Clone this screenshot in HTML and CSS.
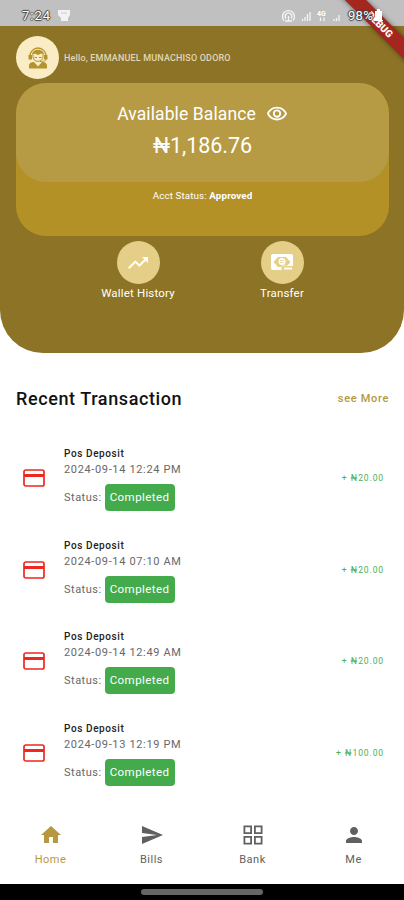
FILE: index.html
```html
<!DOCTYPE html>
<html lang="en">
<head>
<meta charset="utf-8">
<meta name="viewport" content="width=device-width, initial-scale=1">
<title>Wallet</title>
<link rel="stylesheet" href="styles.css">
</head>
<body>
<div class="statusbar">
  <span class="time">7:24</span>
  <svg class="cup" width="14" height="14" viewBox="0 0 14 14"><path d="M1 1h12v5l-2 3v3H4V9L1 6z" fill="#f2f2f2"/><path d="M4 4h6" stroke="#ccc" fill="none"/></svg>
  <svg class="signals" width="66" height="14" viewBox="0 0 66 14" fill="none" stroke="#f5f5f5" stroke-width="1.3">
    <path d="M3 11.5a6 6 0 1 1 9 0M5 9.5a3.3 3.3 0 1 1 5 0M7.5 7v5"/>
    <path d="M4 12h7M21.500 12v-2M24 12V8M26.500 12V5M29 12V3" />
    <path d="M39.500 12V8.500M43 12V8.500M53 12v-2M55.500 12V9M58 12V6" />
    <text x="36" y="7" class="net">4G</text>
  </svg>
  <span class="percent">98%</span>
  <svg class="battery" width="9" height="13" viewBox="0 0 9 13"><path d="M3 0h3v2h2v9h1v1H0v-1h1V2h2z" fill="#fff"/></svg>
</div>
<div class="corner"><div class="ribbon">DEBUG</div></div>

<header class="hero">
  <div class="greeting">
    <div class="avatar">
      <svg width="20" height="22" viewBox="0 0 20 22">
        <path d="M2 9a8 8 0 0 1 16 0" fill="none" stroke="#b5942e" stroke-width="1.300"/>
        <path d="M4 8c0-7 12-7 12 0l-3-1.500L10 8 7 6.500zM.5 8H4v4.500H.5zM16 8h3.500v4.500H16z" fill="#b5942e"/>
        <path d="M5 8v1.500c0 6.500 10 6.500 10 0V8M6.500 10.500h2.500M11 10.500h2.500M18 12c0 2-2 2.500-6 2.500" fill="none" stroke="#b5942e"/>
        <path d="M1 21.500V19c0-3 2-4 5-4l4 4.500 4-4.500c3 0 5 1 5 4v2.500z" fill="#b5942e"/>
      </svg>
    </div>
    <span class="hello">Hello, EMMANUEL MUNACHISO ODORO</span>
  </div>
  <section class="card">
    <div class="balance">
      <div class="label"><span>Available Balance</span>
        <svg width="22" height="22" viewBox="0 0 24 24" fill="#fff"><path d="M12 6c3.790 0 7.170 2.130 8.820 5.500C19.170 14.870 15.790 17 12 17s-7.170-2.130-8.820-5.500C4.830 8.130 8.210 6 12 6m0-2C7 4 2.730 7.110 1 11.500 2.730 15.890 7 19 12 19s9.270-3.110 11-7.500C21.270 7.110 17 4 12 4zm0 5a2.500 2.500 0 1 1 0 5 2.500 2.500 0 0 1 0-5m0-2a4.500 4.500 0 1 0 0 9 4.500 4.500 0 0 0 0-9z"/></svg>
      </div>
      <div class="amount">₦1,186.76</div>
    </div>
    <div class="acct">Acct Status: <b>Approved</b></div>
  </section>
  <nav class="actions">
    <div class="action">
      <div class="disc"><svg width="24" height="24" viewBox="0 0 24 24" fill="#fff"><path d="m16 6 2.290 2.290-4.880 4.880-4-4L2 16.590 3.410 18l6-6 4 4 6.300-6.290L22 12V6z"/></svg></div>
      <span>Wallet History</span>
    </div>
    <div class="action">
      <div class="disc"><svg width="22" height="17" viewBox="0 0 22 17"><path d="M2 0h18q2 0 2 2v10H12v4H2q-2 0-2-2V2q0-2 2-2z" fill="#fff"/><path d="M2.500 8 7 3h8l4.500 5-3 3.500H12L10 13H7z" fill="#e5cf88"/><circle cx="11" cy="7.500" r="3.500" fill="#fff"/><path d="M9 6.500h4M9 8.500h4" stroke="#e5cf88" stroke-width=".7"/><path d="M10.500 12.500H22V17H10.500z" fill="#e5cf88"/><path d="M13 14.500h8" stroke="#fff" stroke-width="2"/></svg></div>
      <span>Transfer</span>
    </div>
  </nav>
</header>

<main>
  <div class="heading"><h1>Recent Transaction</h1><a>see More</a></div>
  <article class="txn">
    <svg class="cc" width="22" height="18" viewBox="0 0 22 18"><rect x="1" y="1" width="20" height="16" rx="1.800"/><path d="M1 6.500h20"/></svg>
    <div class="info"><b>Pos Deposit</b><span class="date">2024-09-14 12:24 PM</span><div class="state">Status: <em>Completed</em></div></div>
    <span class="sum">+ ₦20.00</span>
  </article>
  <article class="txn">
    <svg class="cc" width="22" height="18" viewBox="0 0 22 18"><rect x="1" y="1" width="20" height="16" rx="1.800"/><path d="M1 6.500h20"/></svg>
    <div class="info"><b>Pos Deposit</b><span class="date">2024-09-14 07:10 AM</span><div class="state">Status: <em>Completed</em></div></div>
    <span class="sum">+ ₦20.00</span>
  </article>
  <article class="txn">
    <svg class="cc" width="22" height="18" viewBox="0 0 22 18"><rect x="1" y="1" width="20" height="16" rx="1.800"/><path d="M1 6.500h20"/></svg>
    <div class="info"><b>Pos Deposit</b><span class="date">2024-09-14 12:49 AM</span><div class="state">Status: <em>Completed</em></div></div>
    <span class="sum">+ ₦20.00</span>
  </article>
  <article class="txn">
    <svg class="cc" width="22" height="18" viewBox="0 0 22 18"><rect x="1" y="1" width="20" height="16" rx="1.800"/><path d="M1 6.500h20"/></svg>
    <div class="info"><b>Pos Deposit</b><span class="date">2024-09-13 12:19 PM</span><div class="state">Status: <em>Completed</em></div></div>
    <span class="sum">+ ₦100.00</span>
  </article>
</main>

<nav class="tabs">
  <div class="tab active"><svg width="24" height="24" viewBox="0 0 24 24"><path d="M10 20v-6h4v6h5v-8h3L12 3 2 12h3v8z"/></svg><span>Home</span></div>
  <div class="tab"><svg width="24" height="24" viewBox="0 0 24 24"><path d="M2.010 21 23 12 2.010 3 2 10l15 2-15 2z"/></svg><span>Bills</span></div>
  <div class="tab"><svg width="24" height="24" viewBox="0 0 24 24"><path fill-rule="evenodd" d="M2.500 2.500h8.500V11H2.500zM4.300 4.300v4.900h4.900V4.300zM13 2.500h8.500V11H13zm1.800 1.800v4.900h4.900V4.300zM2.500 13h8.500v8.500H2.500zm1.800 1.800v4.900h4.900v-4.900zM13 13h8.500v8.500H13zm1.800 1.800v4.900h4.900v-4.900z"/></svg><span>Bank</span></div>
  <div class="tab"><svg width="24" height="24" viewBox="0 0 24 24"><path d="M12 12c2.210 0 4-1.790 4-4s-1.790-4-4-4-4 1.790-4 4 1.790 4 4 4zm0 2c-2.670 0-8 1.340-8 4v2h16v-2c0-2.660-5.330-4-8-4z"/></svg><span>Me</span></div>
</nav>
<div class="gesture"><i></i></div>
</body>
</html>
```
FILE: styles.css
```css
* { box-sizing: border-box; }
body {
  margin: 0;
  width: 404px;
  height: 900px;
  overflow: hidden;
  position: relative;
  display: flex;
  flex-direction: column;
  background: #fff;
  font-family: Roboto, "Liberation Sans", sans-serif;
}
svg { flex: none; display: block; }
.statusbar {
  height: 26px;
  flex: none;
  background: #c0c0c0;
  display: flex;
  align-items: center;
  padding: 5px 20px 0 22px;
}
.time, .percent {
  color: #fff;
  font-size: 13px;
  line-height: 14px;
  text-shadow: 1px 0 1px #444, -1px 0 1px #444, 0 1px 1px #444, 0 -1px 1px #444;
}
.time { width: 35px; letter-spacing: 1px; }
.signals { margin-left: auto; margin-right: 1px; }
.net { font-size: 7px; font-weight: 700; fill: #fff; stroke: none; }
.percent { position: relative; z-index: 3; letter-spacing: .3px; }
.battery { position: relative; z-index: 3; margin-left: 1px; }
.corner {
  position: absolute;
  top: 0;
  right: 0;
  width: 90px;
  height: 90px;
  overflow: hidden;
  z-index: 2;
}
.statusbar .battery { margin-right: 0; }
.statusbar { padding-right: 21px; }
.ribbon {
  position: absolute;
  left: 16px;
  top: 16.5px;
  width: 100px;
  height: 15px;
  transform: rotate(45deg);
  background: #a3271f;
  box-shadow: 0 0 5px rgba(0, 0, 0, .5);
  color: #fff;
  font-size: 10px;
  font-weight: 900;
  line-height: 15px;
  text-align: center;
}
.hero {
  height: 327px;
  flex: none;
  background: #8c7325;
  border-radius: 0 0 43px 43px;
  padding: 10px 15px 0 16px;
}
.greeting { display: flex; align-items: center; gap: 5px; height: 43px; }
.avatar, .disc {
  width: 43px;
  height: 43px;
  border-radius: 50%;
  display: flex;
  align-items: center;
  justify-content: center;
}
.avatar { background: #faecc5; }
.hello { color: #e1d7b7; font-size: 9px; font-weight: 500; letter-spacing: .17px; }
.card {
  height: 153px;
  margin-top: 4px;
  border-radius: 30px;
  background: #b39126;
  overflow: hidden;
  color: #fff;
  text-align: center;
}
.balance { height: 99px; border-radius: 30px; background: #b79b44; padding-top: 19px; }
.label {
  display: flex;
  align-items: center;
  justify-content: center;
  gap: 10px;
  height: 23px;
  font-size: 17.500px;
  letter-spacing: .1px;
}
.amount { font-size: 21.500px; line-height: 26px; margin-top: 8px; letter-spacing: -.05px; }
.acct { font-size: 9.800px; line-height: 12px; margin-top: 8px; letter-spacing: .12px; }
.acct b { font-weight: 700; }
.actions { display: flex; justify-content: space-between; padding: 5px 57px 0 72px; }
.action { width: 100px; display: flex; flex-direction: column; align-items: center; color: #fff; font-size: 11.500px; line-height: 16px; gap: 1px; }
.action span { white-space: nowrap; letter-spacing: .18px; }
.disc { background: #e5cf88; }
main { height: 457px; flex: none; padding: 33px 15px 0 16px; }
.heading { display: flex; align-items: center; justify-content: space-between; height: 24px; }
h1 { margin: 0; font-size: 18px; font-weight: 500; color: #111; letter-spacing: .6px; }
.heading a { color: #b5983f; font-size: 11px; font-weight: 500; letter-spacing: .68px; }
.txn { display: flex; align-items: center; height: 91.700px; padding: 0 5px 0 7px; }
.heading + .txn { margin-top: 22px; }
.cc { fill: none; stroke: #ee2720; stroke-width: 1.700; }
.cc path { stroke-width: 3; }
.info { margin-left: 19px; flex: 1; font-size: 11px; color: #686868; letter-spacing: .65px; padding-top: 1px; }
.info b { display: block; font-size: 10px; line-height: 15px; font-weight: 500; color: #222; letter-spacing: .6px; }
.date { display: block; line-height: 17px; }
.state { display: flex; align-items: center; gap: 3px; margin-top: 6px; height: 27px; letter-spacing: .5px; }
.state em {
  font-style: normal;
  width: 70px;
  height: 27px;
  line-height: 27px;
  text-align: center;
  border-radius: 4px;
  background: #43ab4b;
  color: #fff;
  font-size: 11.500px;
  letter-spacing: .45px;
}
.sum { font-size: 8.500px; color: #4cae52; letter-spacing: .9px; }
.tabs { height: 74px; flex: none; display: flex; padding-top: 13px; }
.tab {
  flex: 1;
  display: flex;
  flex-direction: column;
  align-items: center;
  gap: 4px;
  font-size: 11px;
  line-height: 17px;
  letter-spacing: .5px;
  color: #606060;
}
.tab svg { fill: #606060; }
.tab.active { color: #b5983f; }
.tab.active svg { fill: #b5983f; }
.gesture { flex: 1; background: #000; display: flex; justify-content: center; padding-top: 5px; }
.gesture i { width: 122px; height: 6px; border-radius: 3px; background: #666; }
```
